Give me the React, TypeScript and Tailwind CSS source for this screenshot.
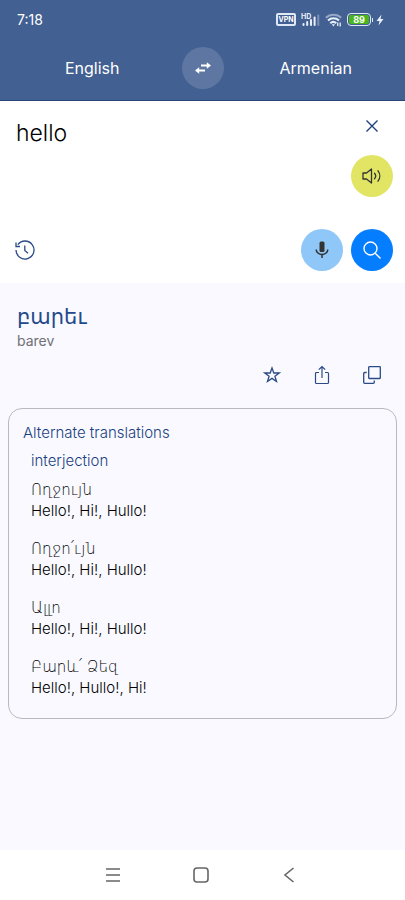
import { useState } from "react";

const alternates = [
  { word: "Ողջույն", meanings: "Hello!, Hi!, Hullo!" },
  { word: "Ողջո՛ւյն", meanings: "Hello!, Hi!, Hullo!" },
  { word: "Ալլո", meanings: "Hello!, Hi!, Hullo!" },
  { word: "Բարև՛ Ձեզ", meanings: "Hello!, Hullo!, Hi!" },
];

function StatusBar() {
  return (
    <div className="flex h-10 items-center justify-between pl-[17px] pr-[21px] pb-px text-white">
      <span className="text-sm">7:18</span>
      <div className="flex items-center gap-[5px]">
        <span className="flex h-[13px] w-5 items-center justify-center rounded-[2px] border-2 border-[#dfe8f7] text-[7px] font-bold leading-none">
          VPN
        </span>
        <svg width="19" height="14" viewBox="0 0 19 14" fill="#e8effa" aria-hidden="true">
          <text x="0" y="5.500" fontSize="7" fontWeight="700">
            HD
          </text>
          <rect x="1.500" y="10" width="2" height="3" rx="1" />
          <rect x="5.200" y="8" width="2" height="5" rx="1" />
          <rect x="9" y="6" width="2" height="7" rx="1" />
          <rect x="12.600" y="3.500" width="2" height="9.500" rx="1" />
          <rect x="16.300" y="1.500" width="2" height="11.500" rx="1" opacity="0.35" />
        </svg>
        <svg width="17" height="14" viewBox="0 0 17 14" fill="none" stroke="#e8effa" strokeWidth="2" aria-hidden="true">
          <path d="M0.800 4.800a11 11 0 0 1 15.400 0" opacity="0.5" />
          <path d="M3 7.500a8 8 0 0 1 11 0" />
          <path d="M5.300 10.200a4.500 4.500 0 0 1 6 0" />
          <path d="M6.800 11.200h3.200l-1.600 2.300z" fill="#e8effa" stroke="none" />
          <path d="M12.700 9.500v3.500M15.200 9.500v4" strokeWidth="1.300" />
        </svg>
        <div className="flex items-center">
          <span className="flex h-[13px] w-6 rounded-[4px] border border-[#dfe8f7] p-px">
            <span className="flex flex-1 items-center justify-center rounded-[2px] bg-[#4cb51c] text-[9px] font-bold leading-none">
              89
            </span>
          </span>
          <span className="ml-px h-1 w-px bg-[#dfe8f7]" />
          <svg className="ml-[3px]" width="8" height="12" viewBox="0 0 8 12" fill="#e8effa" aria-hidden="true">
            <path d="M5.500 0.500L0.500 7H3.500L2.500 11.500L7.500 5H4.500z" />
          </svg>
        </div>
      </div>
    </div>
  );
}

function Header() {
  return (
    <header className="border-b border-[#274778] bg-[#426091]">
      <StatusBar />
      <div className="flex h-[60px] items-start pt-[7px] text-white">
        <button type="button" className="h-[42px] flex-1 pl-[3px] text-base">
          English
        </button>
        <button
          type="button"
          aria-label="Swap languages"
          className="flex size-[42px] items-center justify-center rounded-full bg-[#5d77a2]"
        >
          <svg width="16" height="12" viewBox="0 0 16 12" fill="none" stroke="white" strokeWidth="1.800">
            <path d="M6 3.500h7M3 8.500h7" />
            <path d="M11.800 0.300v6.400L16 3.500zM4.200 5.300v6.400L0 8.500z" fill="white" stroke="none" />
          </svg>
        </button>
        <button type="button" className="h-[42px] flex-1 pl-[3px] text-base">
          Armenian
        </button>
      </div>
    </header>
  );
}

function SourcePanel() {
  const [text, setText] = useState("hello");

  return (
    <section className="flex flex-col bg-white px-3 pb-3">
      <div className="flex pt-[11px]">
        <textarea
          aria-label="Text to translate"
          value={text}
          onChange={(e) => setText(e.target.value)}
          className="h-[117px] min-w-0 flex-1 resize-none pl-1 pt-[5px] text-[23px] font-light leading-8 text-black outline-none"
        />
        <div className="flex flex-col items-center gap-[15px]">
          <button type="button" aria-label="Clear text" onClick={() => setText("")} className="flex h-7 w-[42px] items-center justify-center">
            <svg width="14" height="14" viewBox="0 0 14 14" fill="none" stroke="#1d4180" strokeWidth="1.400">
              <path d="M1.500 1.500l11 11M12.500 1.500l-11 11" />
            </svg>
          </button>
          <button type="button" aria-label="Listen" className="flex size-[42px] items-center justify-center rounded-full bg-[#e1e563]">
            <svg width="20" height="16" viewBox="0 0 20 16" fill="none" stroke="#333" strokeWidth="1.300">
              <path d="M1 5h3.500L9.500 1v14L4.500 11H1z" strokeLinejoin="round" />
              <path d="M12.500 5.300a4 4 0 0 1 0 5.400M16 2.800a8.500 8.500 0 0 1 0 10.400" strokeLinecap="round" />
            </svg>
          </button>
        </div>
      </div>
      <div className="flex items-center gap-2">
        <button type="button" aria-label="History" className="mr-auto flex h-[42px] w-[26px] items-center justify-center">
          <svg width="20" height="20" viewBox="0 0 20 20" fill="none" stroke="#2a4b87" strokeWidth="1.300">
            <path d="M1 10a9 9 0 1 0 1.800-5.400M1 2.500v4h4M9.800 5.500v5l3.200 2.700" />
          </svg>
        </button>
        <button type="button" aria-label="Speak" className="flex size-[42px] items-center justify-center rounded-full bg-[#8fc8f8]">
          <svg width="14" height="18" viewBox="0 0 14 18" fill="none" stroke="#333" strokeWidth="1.500">
            <rect x="4.500" y="0.500" width="5" height="10.500" rx="1.500" fill="#333" stroke="none" />
            <path d="M1.200 8.500a5.800 5 0 0 0 11.600 0M7 13.500V17" />
          </svg>
        </button>
        <button type="button" aria-label="Search" className="flex size-[42px] items-center justify-center rounded-full bg-[#057dff]">
          <svg width="18" height="18" viewBox="0 0 18 18" fill="none" stroke="white" strokeWidth="1.400">
            <circle cx="7.500" cy="7.500" r="6.500" />
            <path d="M12.200 12.200l5.300 5.300" />
          </svg>
        </button>
      </div>
    </section>
  );
}

function Result() {
  return (
    <section className="px-[17px] pt-5">
      <h1 className="font-['DejaVu_Sans',sans-serif] text-[21px] leading-7 text-[#23498a]">բարեւ</h1>
      <p className="text-sm leading-5 text-[#707074]">barev</p>
      <div className="flex justify-end gap-[26px] pr-1 pt-3">
        <button type="button" aria-label="Add to favourites" className="flex size-6 items-center justify-center">
          <svg width="18" height="18" viewBox="0 0 18 18" fill="none" stroke="#2a4b87" strokeWidth="1.300">
            <path d="M9 2l1.800 5h5.400l-4.300 3.300 1.600 5.200L9 12.400l-4.500 3.100 1.600-5.200L1.800 7h5.400z" />
          </svg>
        </button>
        <button type="button" aria-label="Share" className="flex size-6 items-center justify-center">
          <svg width="16" height="20" viewBox="0 0 16 20" fill="none" stroke="#2a4b87" strokeWidth="1.200">
            <path d="M5 7.500H2.500a1 1 0 0 0-1 1v9a1 1 0 0 0 1 1h11a1 1 0 0 0 1-1v-9a1 1 0 0 0-1-1H11M8 13V1.500M4.800 4.700L8 1.500l3.200 3.200" />
          </svg>
        </button>
        <button type="button" aria-label="Copy" className="flex size-6 items-center justify-center">
          <svg width="18" height="18" viewBox="0 0 18 18" fill="none" stroke="#2a4b87" strokeWidth="1.300">
            <rect x="5.700" y="0.700" width="11.600" height="11.800" rx="0.500" />
            <path d="M3.700 6.500H1.700a1 1 0 0 0-1 1v8.800a1 1 0 0 0 1 1h8.600a1 1 0 0 0 1-1v-1.800" />
          </svg>
        </button>
      </div>
    </section>
  );
}

function Alternates() {
  return (
    <section className="mx-2 mt-[21px] rounded-[14px] border border-[#b9b9c0] px-[14px] pb-5 pt-[14px] text-[15px] font-light">
      <h2 className="leading-5 text-[#1a3f80]">Alternate translations</h2>
      <div className="pl-2">
        <h3 className="mt-2 leading-5 text-[#1a3f80]">interjection</h3>
        <ul className="mt-[9px] flex flex-col gap-[18px] text-black">
          {alternates.map((item) => (
            <li key={item.word}>
              <p className="font-['DejaVu_Sans',sans-serif] leading-5">{item.word}</p>
              <p className="leading-[21px]">{item.meanings}</p>
            </li>
          ))}
        </ul>
      </div>
    </section>
  );
}

function NavBar() {
  return (
    <nav className="flex h-[50px] items-center justify-center gap-16 bg-white pr-1 pb-px">
      <button type="button" aria-label="Recent apps" className="flex size-6 items-center justify-center">
        <svg width="16" height="16" viewBox="0 0 16 16" fill="none" stroke="#666" strokeWidth="1.400">
          <path d="M1 2h14M1 8h14M1 14h14" />
        </svg>
      </button>
      <button type="button" aria-label="Home" className="flex size-6 items-center justify-center">
        <svg width="16" height="16" viewBox="0 0 16 16" fill="none" stroke="#666" strokeWidth="1.600">
          <rect x="1" y="1" width="14" height="14" rx="3" />
        </svg>
      </button>
      <button type="button" aria-label="Back" className="flex size-6 items-center justify-center">
        <svg width="12" height="16" viewBox="0 0 12 16" fill="none" stroke="#666" strokeWidth="1.600">
          <path d="M10.500 1L2 8l8.500 7" />
        </svg>
      </button>
    </nav>
  );
}

export default function App() {
  return (
    <div className="flex min-h-screen flex-col bg-[#f9f9ff] font-['Inter',sans-serif]">
      <Header />
      <main className="flex-1">
        <SourcePanel />
        <Result />
        <Alternates />
      </main>
      <NavBar />
    </div>
  );
}
